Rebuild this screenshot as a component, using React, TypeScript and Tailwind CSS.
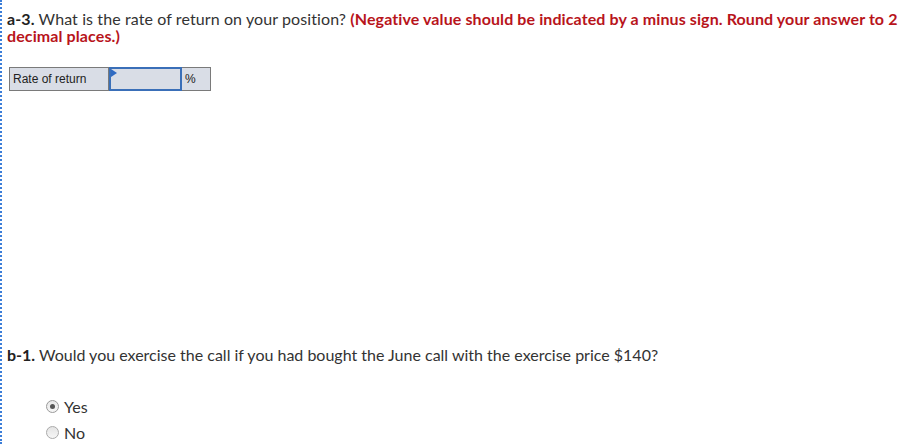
import React from "react";

export default function App() {
  return (
    <div className="w-[909px] h-[444px] bg-white overflow-hidden relative">
      <div className="absolute left-0 top-0 bottom-0 border-l-2 border-dotted border-[#3b7dd8]" />
      <div className="pl-[7px] pt-[10px] text-[16px] leading-[17px] text-[#333] font-['Lato',sans-serif]">
        <p className="tracking-[0.1px]">
          <b className="text-[#222]">a-3.</b> What is the rate of return on your position?{" "}
          <b className="text-[#b8141b]">(Negative value should be indicated by a minus sign. Round your answer to 2</b>
          <br />
          <b className="text-[#b8141b]">decimal places.)</b>
        </p>
        <div className="mt-[23px] ml-[2px] flex h-[24px] w-[202px] border border-[#7a7a7a] bg-[#d9dde6] font-['Liberation_Sans',sans-serif] text-[12px] leading-[14px] text-[#222]">
          <div className="w-[99px] border-r border-[#7a7a7a] flex items-center pl-[3px]">Rate of return</div>
          <div className="relative w-[73px] border-2 border-[#3a6fb8] -my-px">
            <div className="absolute left-0 top-0 w-0 h-0 border-t-[4px] border-b-[4px] border-l-[6px] border-t-transparent border-b-transparent border-l-[#2f6ac2]" />
          </div>
          <div className="flex-1 flex items-center pl-[3px]">%</div>
        </div>
        <p className="mt-[255px]">
          <b className="text-[#222]">b-1.</b> Would you exercise the call if you had bought the June call with the exercise price $140?
        </p>
        <div className="mt-[35px] ml-[39px] flex flex-col gap-[9px]">
          <label className="flex items-center gap-[5px]">
            <span className="w-[13px] h-[13px] rounded-full border border-[#9a9a9a] bg-gradient-to-b from-[#e8e8e8] to-[#f6f6f6] flex items-center justify-center">
              <span className="w-[5px] h-[5px] rounded-full bg-[#555]" />
            </span>
            Yes
          </label>
          <label className="flex items-center gap-[5px]">
            <span className="w-[13px] h-[13px] rounded-full border border-[#aaa] bg-gradient-to-b from-[#e4e4e4] to-[#f6f6f6]" />
            No
          </label>
        </div>
      </div>
    </div>
  );
}
